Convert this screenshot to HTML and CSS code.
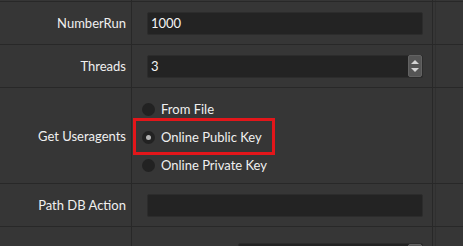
FILE: index.html
```html
<!DOCTYPE html>
<html lang="en">

<head>
    <meta charset="UTF-8">
    <title>Settings</title>
    <link rel="stylesheet" href="styles.css">
</head>

<body>

    <div class="grid">
        <div class="row top">
            <div class="label"></div>
            <div class="field"></div>
            <div class="side"></div>
        </div>

        <div class="row">
            <div class="label">NumberRun</div>
            <div class="field">
                <div class="input">1000</div>
            </div>
            <div class="side"></div>
        </div>

        <div class="row">
            <div class="label">Threads</div>
            <div class="field">
                <div class="input spin">
                    <span class="value">3</span>
                    <span class="arrows">
                        <svg width="10" height="18" viewBox="0 0 10 18">
                            <path d="M1 7 L5 3 L9 7 Z" fill="#d4d4d4" />
                            <path d="M1 11 L5 15 L9 11 Z" fill="#d4d4d4" />
                        </svg>
                    </span>
                </div>
            </div>
            <div class="side"></div>
        </div>

        <div class="row tall">
            <div class="label">Get Useragents</div>
            <div class="field">
                <div class="radios">
                    <div class="radio"><span class="dot"></span>From File</div>
                    <div class="radio checked marked"><span class="dot"></span>Online Public Key</div>
                    <div class="radio"><span class="dot"></span>Online Private Key</div>
                </div>
            </div>
            <div class="side"></div>
        </div>

        <div class="row">
            <div class="label">Path DB Action</div>
            <div class="field">
                <div class="input"></div>
            </div>
            <div class="side"></div>
        </div>

        <div class="row">
            <div class="label"></div>
            <div class="field split">
                <span class="sub">Delay</span>
                <div class="input spin short">
                    <span class="value"></span>
                    <span class="arrows">
                        <svg width="10" height="18" viewBox="0 0 10 18">
                            <path d="M1 7 L5 3 L9 7 Z" fill="#d4d4d4" />
                            <path d="M1 11 L5 15 L9 11 Z" fill="#d4d4d4" />
                        </svg>
                    </span>
                </div>
            </div>
            <div class="side"></div>
        </div>
    </div>

</body>

</html>
```

FILE: styles.css
```css
body {
    margin: 0;
    background-color: #363636;
    color: #f0f0f0;
    font-family: Lato, "Noto Sans", sans-serif;
    font-size: 13px;
    overflow: hidden;
}

.grid {
    display: flex;
    flex-direction: column;
}

.row {
    display: flex;
    height: 42px;
    border-bottom: 1px solid #282828;
}

.row.top {
    height: 1px;
}

.row.tall {
    height: 95px;
}

.label {
    width: 126px;
    padding-right: 5px;
    border-right: 1px solid #282828;
    display: flex;
    align-items: center;
    justify-content: flex-end;
    white-space: nowrap;
}

.field {
    width: 276px;
    padding: 0 9px 0 15px;
    border-right: 1px solid #282828;
    display: flex;
    align-items: center;
}

.side {
    flex: 1;
    border-left: 1px solid #303030;
    margin-left: 2px;
}

.input {
    box-sizing: border-box;
    width: 276px;
    height: 23px;
    background-color: #232323;
    border: 1px solid #2c2c2c;
    border-radius: 2px;
    padding: 0 3px;
    display: flex;
    align-items: center;
    color: #f4f4f4;
}

.spin {
    padding-right: 0;
}

.spin .value {
    flex: 1;
}

.arrows {
    width: 14px;
    height: 22px;
    box-sizing: border-box;
    background-color: #555555;
    border: 1px solid #626262;
    border-radius: 2px;
    display: flex;
    align-items: center;
    justify-content: center;
}

.radios {
    display: flex;
    flex-direction: column;
    margin-left: -5px;
    padding-top: 3px;
}

.radio {
    position: relative;
    height: 28px;
    display: flex;
    align-items: center;
    white-space: nowrap;
}

.dot {
    width: 13px;
    height: 13px;
    border-radius: 50%;
    background-color: #222222;
    margin-right: 6px;
    display: flex;
    align-items: center;
    justify-content: center;
}

.checked .dot::before {
    content: "";
    width: 5px;
    height: 5px;
    border-radius: 50%;
    background-color: #b4b4b4;
}

.marked::after {
    content: "";
    position: absolute;
    left: -9px;
    top: -5px;
    width: 136px;
    height: 31px;
    border: 3px solid #e3161a;
}

.split {
    justify-content: flex-end;
    padding-top: 16px;
    align-items: flex-start;
}

.sub {
    margin-right: 8px;
    margin-top: 4px;
}

.short {
    width: 185px;
}
```
